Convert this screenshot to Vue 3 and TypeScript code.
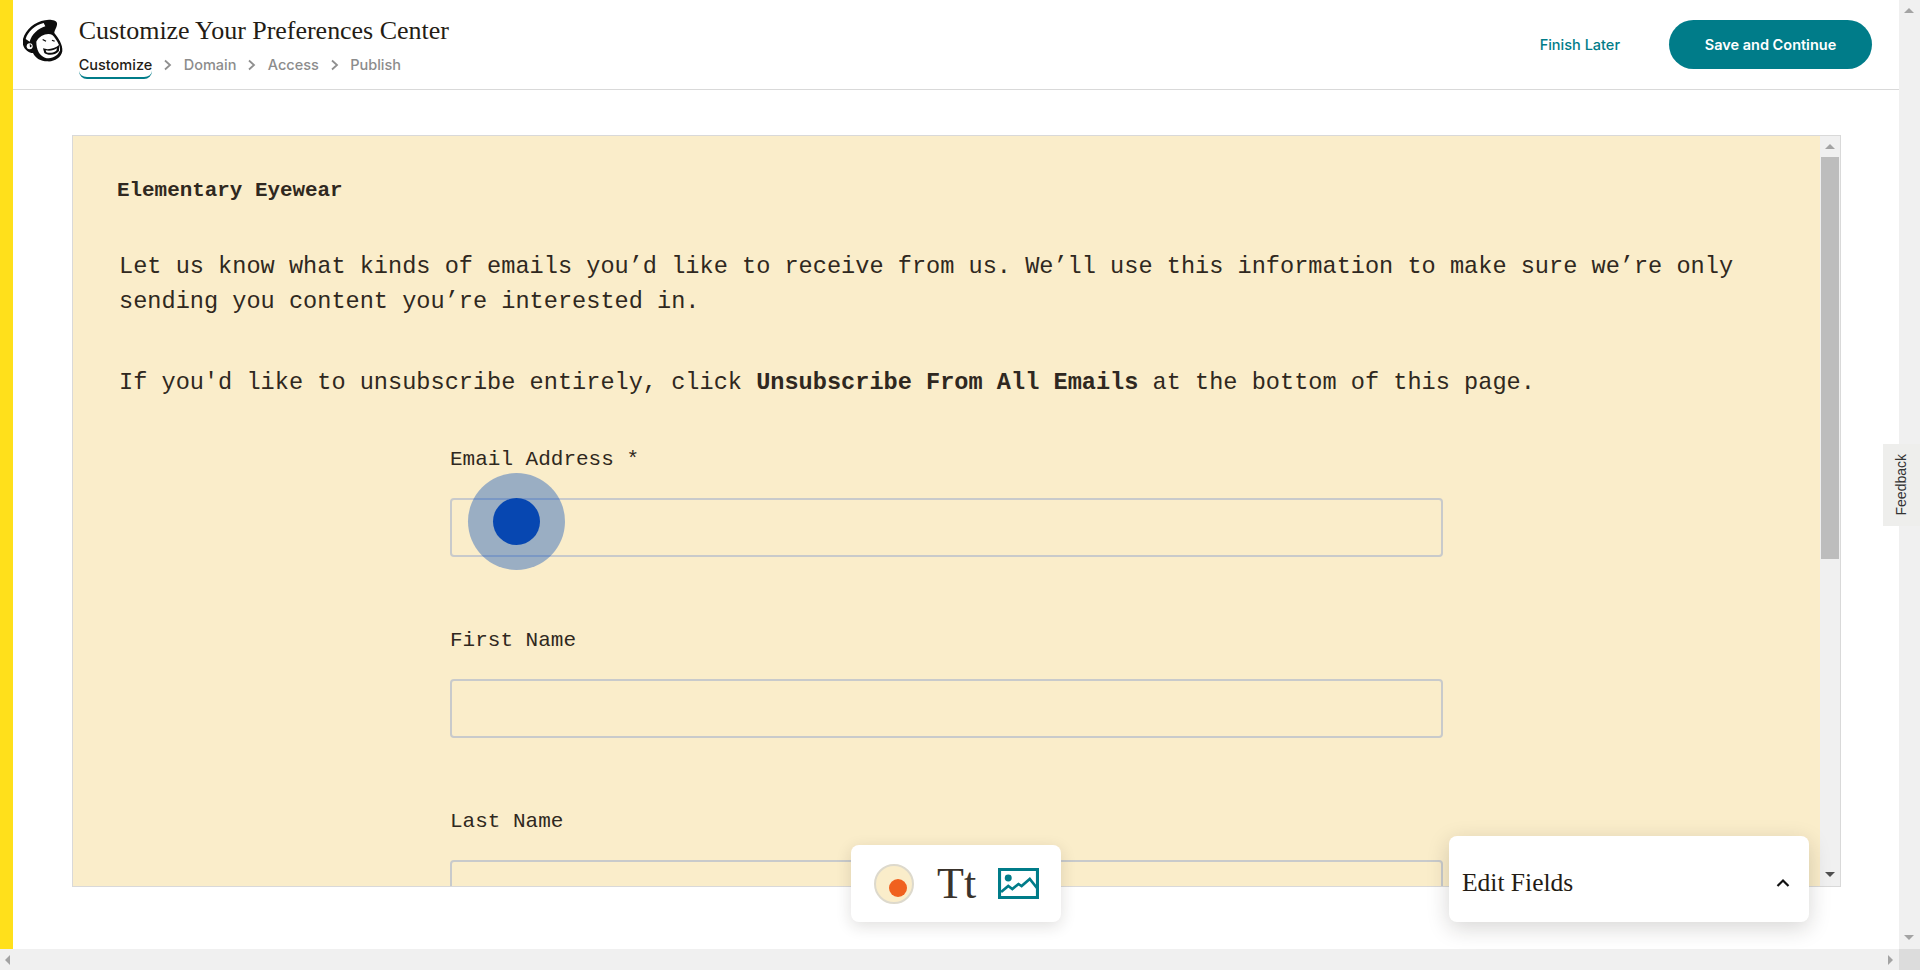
<script setup lang="ts">
const steps: string[] = ['Domain', 'Access', 'Publish']
const fields: string[] = ['Email Address *', 'First Name', 'Last Name']
</script>

<template>
  <div class="page">
    <div class="main-row">
      <div class="brand-strip"></div>
      <div class="content">
        <header class="top">
          <div class="top-left">
            <svg class="logo" viewBox="60 55 140 135" aria-hidden="true">
              <path fill="#0d0d0d" d="M72 118C80 90 108 66 138 62C152 58 172 62 174 70C176 80 166 92 166 100C178 115 192 135 190 155C186 175 165 187 145 185C125 185 110 176 102 160C90 160 76 150 72 135Z" />
              <path fill="#fff" d="M80 118C86 96 108 76 134 70L139 80C118 86 98 104 92 126Z" />
              <circle cx="92" cy="140" r="9" fill="#fff" />
              <path fill="#0d0d0d" d="M92 134a6 6 0 0 1 5 8l-4 1z" />
              <path fill="#fff" d="M112 126C120 108 146 98 160 106C172 118 184 138 183 152C178 168 158 180 138 174C122 168 112 152 112 126Z" />
              <path fill="#0d0d0d" d="M132 118l10 5-2 3-10-5zM160 120l8 3-2 3-8-3z" />
              <path fill="#0d0d0d" d="M132 146C148 152 168 146 180 136L180 154C168 168 146 168 136 160Z" />
              <path fill="#fff" d="M140 152C152 155 165 152 174 146L172 153C162 160 150 161 142 158Z" />
            </svg>
            <div class="title-block">
              <h1 class="title">Customize Your Preferences Center</h1>
              <nav class="steps">
                <span class="step active">Customize</span>
                <template v-for="s in steps" :key="s">
                  <svg class="step-chevron" viewBox="0 0 10 12" aria-hidden="true">
                    <path d="M2 1.5 7 6l-5 4.5" fill="none" stroke="#8f8f8f" stroke-width="1.8" />
                  </svg>
                  <span class="step">{{ s }}</span>
                </template>
              </nav>
            </div>
          </div>
          <div class="top-right">
            <a class="finish">Finish Later</a>
            <button class="save" type="button">Save and Continue</button>
          </div>
        </header>

        <section class="canvas">
          <div class="panel">
            <div class="panel-body">
              <h2 class="brand-name">Elementary Eyewear</h2>
              <p class="intro">Let us know what kinds of emails you’d like to receive from us. We’ll use this information to make sure we’re only sending you content you’re interested in.</p>
              <p class="intro second">If you'd like to unsubscribe entirely, click <strong>Unsubscribe From All Emails</strong> at the bottom of this page.</p>
              <div class="form">
                <div v-for="f in fields" :key="f" class="field">
                  <label class="field-label">{{ f }}</label>
                  <div class="field-input"></div>
                </div>
              </div>
            </div>
            <div class="panel-scroll">
              <span class="arrow up dim"></span>
              <div class="panel-thumb"></div>
              <span class="arrow down dark"></span>
            </div>
          </div>
        </section>
      </div>
      <div class="vscroll">
        <span class="arrow up dim"></span>
        <span class="arrow down mid"></span>
      </div>
    </div>
    <div class="hscroll">
      <span class="arrow left mid"></span>
      <span class="arrow right mid"></span>
      <div class="corner"></div>
    </div>

    <div class="pulse"><div class="pulse-dot"></div></div>

    <div class="tools">
      <div class="tool-color"><span></span></div>
      <div class="tool-text">Tt</div>
      <svg class="tool-image" viewBox="0 0 40 31" preserveAspectRatio="none" aria-hidden="true">
        <rect x="1.5" y="1.5" width="37" height="28" fill="#fff" stroke="#007c89" stroke-width="3" />
        <circle cx="10" cy="10" r="3.4" fill="#007c89" />
        <path d="M3 24l7-6 4 3 6-5 3 2 8-7 7 9" fill="none" stroke="#007c89" stroke-width="2.6" />
      </svg>
    </div>

    <div class="edit-fields">
      <span>Edit Fields</span>
      <svg viewBox="0 0 14 10" class="chev" aria-hidden="true">
        <path d="M1.5 8 7 2.5 12.5 8" fill="none" stroke="#111" stroke-width="2.2" />
      </svg>
    </div>

    <div class="feedback"><span>Feedback</span></div>
  </div>
</template>

<style>
html, body { margin: 0; background: #fff; overflow: hidden; }
</style>

<style scoped>
.page { position: relative; width: 1920px; height: 970px; display: flex; flex-direction: column; overflow: hidden; background: #fff; }
.main-row { display: flex; flex: 1; min-height: 0; }
.brand-strip { width: 13px; background: #ffe01b; flex: none; }
.content { flex: 1; min-width: 0; display: flex; flex-direction: column; }
.top { height: 89px; border-bottom: 1px solid #d9d9d9; display: flex; align-items: flex-start; justify-content: space-between; flex: none; }
.top-left { display: flex; padding: 18px 0 0 6px; }
.logo { width: 46.67px; height: 45px; flex: none; }
.title-block { margin-left: 13px; margin-top: -2px; }
.title { margin: 0; font: 400 26px/29px "Liberation Serif", serif; color: #241c15; letter-spacing: -0.03px; }
.steps { display: flex; align-items: center; margin-top: 10px; height: 20px; }
.step { font: 500 14.5px/20px Inter, sans-serif; color: #8c8c8c; position: relative; }
.step.active { color: #241c15; }
.step.active::after { content: ""; position: absolute; left: 0; right: 0; bottom: -4px; height: 6px; border-bottom: 2px solid #007c89; border-radius: 0 0 12px 12px; }
.step-chevron { width: 10px; height: 12px; margin: 0 10.7px 0 10.7px; }
.top-right { display: flex; align-items: center; height: 49px; margin-top: 20px; padding-right: 27px; }
.finish { font: 500 14.5px/20px Inter, sans-serif; color: #007c89; margin-right: 49px; }
.save { width: 203px; height: 49px; border: 0; border-radius: 25px; background: #007c89; color: #fff; font: 600 14.5px/20px Inter, sans-serif; padding: 0; }
.canvas { flex: 1; padding: 45px 58px 0 59px; min-height: 0; }
.panel { height: 752px; border: 1px solid #d9d9d9; background: #faedca; display: flex; overflow: hidden; box-sizing: border-box; }
.panel-body { flex: 1; min-width: 0; padding: 37px 0 0 44px; overflow: hidden; color: #2f2820; font-family: "Liberation Mono", monospace; }
.brand-name { margin: 0; font-size: 20.9px; line-height: 35px; font-weight: 700; }
.intro { margin: 41px 0 0 2px; width: 1650px; font-size: 23.6px; line-height: 35px; }
.intro.second { margin-top: 46px; }
.form { margin: 46px 0 0 333px; width: 993px; }
.field { height: 181px; }
.field-label { display: block; font-size: 21px; line-height: 28px; }
.field-input { margin-top: 24px; height: 59px; box-sizing: border-box; border: 2px solid #c8cacb; border-radius: 4px; }
.panel-scroll { width: 20px; flex: none; background: #f0f0f0; position: relative; }
.panel-thumb { position: absolute; left: 1px; width: 18px; top: 21px; height: 402px; background: #bdbdbd; }
.vscroll { width: 21px; flex: none; background: #f0f0f0; position: relative; }
.hscroll { height: 21px; flex: none; background: #f0f0f0; position: relative; }
.corner { position: absolute; right: 0; top: 0; width: 21px; height: 21px; background: #dcdcdc; }
.arrow { position: absolute; width: 0; height: 0; border: solid transparent; }
.arrow.up { left: 5px; top: 8px; border-width: 0 5px 5px; border-bottom-color: #a3a3a3; }
.arrow.down { left: 5px; bottom: 9px; border-width: 5px 5px 0; border-top-color: #a3a3a3; }
.arrow.down.dark { border-top-color: #505050; }
.arrow.left { left: 5px; top: 6px; border-width: 5px 5px 5px 0; border-right-color: #a3a3a3; }
.arrow.right { right: 27px; top: 6px; border-width: 5px 0 5px 5px; border-left-color: #a3a3a3; }
.pulse { position: absolute; left: 468px; top: 473px; width: 97px; height: 97px; border-radius: 50%; background: rgba(0, 72, 185, 0.384); display: flex; align-items: center; justify-content: center; }
.pulse-dot { width: 47px; height: 47px; border-radius: 50%; background: #0747b1; }
.tools { position: absolute; left: 851px; top: 845px; width: 210px; height: 77px; background: #fff; border-radius: 8px; box-shadow: 0 4px 16px rgba(36, 28, 21, 0.14); display: flex; align-items: center; box-sizing: border-box; padding: 0 0 0 23px; }
.tool-color { width: 40px; height: 40px; box-sizing: border-box; border: 2px solid #ddd9cc; border-radius: 50%; background: #faedca; position: relative; flex: none; }
.tool-color span { position: absolute; left: 13px; top: 13px; width: 18px; height: 18px; border-radius: 50%; background: #f0611f; }
.tool-text { width: 41px; margin-left: 23px; font: 400 44px/40px "Liberation Serif", serif; color: #3a332c; flex: none; }
.tool-image { width: 41px; height: 31px; margin-left: 20px; flex: none; }
.edit-fields { position: absolute; left: 1449px; top: 836px; width: 360px; height: 86px; background: #fff; border-radius: 8px; box-shadow: 0 6px 22px rgba(36, 28, 21, 0.18); display: flex; align-items: center; justify-content: space-between; box-sizing: border-box; padding: 8px 19px 0 13px; font: 400 25.5px/30px "Liberation Serif", serif; color: #241c15; }
.chev { width: 14px; height: 10px; }
.feedback { position: absolute; left: 1883px; top: 444px; width: 37px; height: 82px; background: #eeeeec; display: flex; align-items: center; justify-content: center; }
.feedback span { writing-mode: vertical-rl; transform: rotate(180deg); font: 400 14px/16px "Liberation Sans", sans-serif; color: #333; margin-right: 2px; }
</style>
